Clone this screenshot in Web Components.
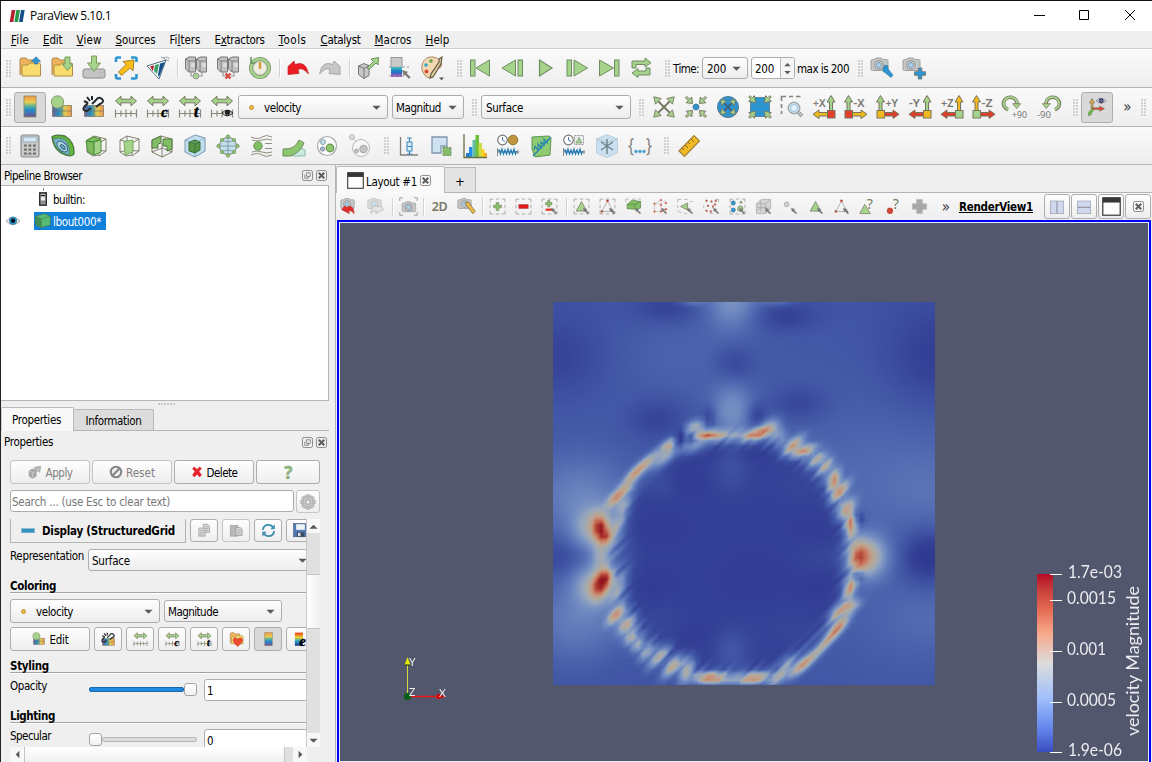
<!DOCTYPE html>
<html lang="en">
<head>
<meta charset="utf-8">
<title>ParaView 5.10.1</title>
<style>
html,body{margin:0;height:100%;overflow:hidden;background:#efefef}
body{font:11.5px/14px "DejaVu Sans Condensed","DejaVu Sans",sans-serif;font-stretch:condensed;color:#000}
</style>
</head>
<body>
<pv-app></pv-app>
<script>
const G='#a6d38b', O='#75745f', B='#2c95d1';
const s=(d,f='none',c=O,w=1,x='')=>`<path d="${d}" fill="${f}" stroke="${c}" stroke-width="${w}" ${x}/>`;
const circ=(x,y,r,f,c=O,w=1)=>`<circle cx="${x}" cy="${y}" r="${r}" fill="${f}" stroke="${c}" stroke-width="${w}"/>`;
const rect=(x,y,w,h,f,c='none',k=1,e='')=>`<rect x="${x}" y="${y}" width="${w}" height="${h}" fill="${f}" stroke="${c}" stroke-width="${k}" ${e}/>`;
const txt=(x,y,t,z=9,c='#777770',e='')=>`<text x="${x}" y="${y}" font-size="${z}" fill="${c}" font-weight="bold" lengthAdjust="spacingAndGlyphs" ${e}>${t}</text>`;
const rng=s('M1 18.5H23M1.5 14.5v8M7 15.5v6M12 14.5v8M17 15.5v6M22.5 14.5v8','none','#8a8878',1.2)+s('M1.5 6 7 1.2V4.2H17V1.2L22.5 6 17 10.8V7.8H7v3z',G);
const glyph='font-family="Liberation Serif" font-style="italic" stroke="#000" stroke-width=".5"';
const map=rect(2.5,10.5,19,11,'url(#rh)',O,.7)+s('M12 10.5v11M2.5 16h19','none','#5a6a70',.6);
const folder=(y=6)=>s(`M2 ${y+13}V${y-2}q0-2 2-2h4l2 2h7v3`,'#eeb45e','#ad8448')+s(`M4 ${y+14}V${y+4}q0-1 1-1h5l1.500-2H21q1.500 0 1.500 1.500V${y+14}z`,'#f8dd6e','#ad8c48');
const servers=s('M1.500 3 5 1h6.500V16H5l-3.500-3zM12.500 3 16 1h6.500V16H16l-3.500-3z','#c3c1c1','#777')+s('M1.500 3 5 5v11M5 5h6.500M12.500 3 16 5v11M16 5h6.500','none','#777',.9)+s('M7 8h4M7 10h4M18 8h4M18 10h4','none','#f5eef0',1)+s('M7 16v4h3M18 16v4h-3','none','#9a9a9a',1.200);
const cam=(c='#c4c6c8')=>s('M1 5q0-1.500 1.500-1.500H5L6 2h5.500l1 1.500h4Q18 3.500 18 5v8q0 1.500-1.500 1.500h-14Q1 14.500 1 13z',c,'#a2a2a2')+circ(9,9,4.200,'#e5e8ea','#999',1.300)+circ(9,9,2.500,'#a9d4f0','#7b98ab',1);
const cubeWire=s('M3 6 10 2l12 3-7 4zM3 6v12l6 4 6-1V9M22 5v12l-7 5M10 2v14l12 1M10 16 3 18','none',O,.9);
const plus=(f='#8bc06c',x=12,y=12,r=5)=>s(`M${x-r/3} ${y-r}h${r*2/3}v${r*2/3}h${r*2/3}v${r*2/3}h${-r*2/3}v${r*2/3}h${-r*2/3}v${-r*2/3}h${-r*2/3}v${-r*2/3}h${r*2/3}z`,f,O,.8);
const dash=s('M1.500 6V1.500H6M9.500 1.500h5M18 1.500h4.500V6M22.500 9.500v5M22.500 18v4.500H18M14.500 22.500h-5M6 22.500H1.500V18M1.500 14.500v-5','none','#a3a39c',1.200);
const ptr=s('M14.500 14.500l5 1.500-1.200 1.200 4 4-1.300 1.300-4-4-1 1z','#777','#777',.6);
const tri=s('M12 5 19.500 18.500h-15z',G);
const clock=(x=6.500,y=6)=>circ(x,y,4.800,'#fff','#777',1.200)+s(`M${x} ${y-3}v3l2.500 1.500`,'none','#47a',1);
const wave=s('M1.500 14v8M1 18h22M22 16v4','none','#888',1)+s('M2 17l1.500-1 1 4 1.500-5 1.500 5 1.500-4 1.500 4 1.500-5 1.500 5 1.500-4 1.500 4 1.500-5 1.500 5 1-3','none','#1f79b4',1.200);
const axes=(up,side,box,dir,t)=>{const L=dir<0,x=L?19:4.500;return s(`M${x-1.500} 16V7h-2.500L${x} .5l4 6.500H${x+1.500}V16z`,up)+(L?s('M16 17.500H7V15L1 19.300 7 23.500V21h9z',side):s('M8 17.500h9V15l6 4.300-6 4.200V21H8z',side))+rect(x-3.500,15.500,7.500,7.500,box,O)+txt(L?1:9.500,11.500,t,11,'#777770','style="font-weight:600" textLength="'+(t[0]==='+'?12.5:11)+'"')};
const arrowIn=(a,x=12,y=12)=>[45,135,225,315].map(r=>`<g transform="rotate(${r} ${x} ${y})">${s(a,G,O,.9)}</g>`).join('');
const rot=s('M18.500 10.500A7.500 7 0 1 0 9 15','none',O,4)+s('M18.500 11A7.500 7 0 1 0 9.500 15','none',G,2.200)+s('M14 8.500h9l-4.500 5.500z',G,O,.8);
const page=(x,y)=>s(`M${x} ${y}h7l3 3v10h-10z`,'#d9d9d9','#8b8b8b')+s(`M${x+2} ${y+4}h6M${x+2} ${y+7}h6M${x+2} ${y+10}h6`,'none','#999');
const triW=s('M12 4 4 19h16z','none','#999',1)+circ(12,4,1.600,'#c83c31','#a44',.5)+circ(4,19,1.600,'#a5684f','#a44',.5)+circ(19.500,19,1.300,'#a5684f','#a44',.5);
const dots=(c,...p)=>p.map(([x,y])=>circ(x,y,1.400,c,c,.5)).join('');
const ICONS={
logo:'<path d="M4 3h5.500L6.500 21H1z" fill="#b5202e"/><path d="M11 3h5.500l-3 18H8z" fill="#259a49"/><path d="M18 3h5.500l-3 18H15z" fill="#11508a"/>',
open:folder()+s('M16.500 8V5.500H13.500L18 .7l4.500 4.800h-3V8z',B,'#3a7da8',.8),
recent:folder()+s('M15 1h5v7h3l-5.500 6.500L12 8h3z',G,'#7a9c5b'),
save:s('M1 15q0-2 2-2h18q2 0 2 2v5q0 2-2 2H3q-2 0-2-2z','#c4c4c4','#8c8c8c')+s('M9.500 0h5v7h4L12 15.500 5.500 7h4z',G,'#7a9c5b')+rect(18,16.500,2.500,2.500,'#eee','#999',.6),
extract:s('M2 6V3q0-1.500 1.500-1.500H7M17 1.500h4q1.500 0 1.500 1.500v3M22.500 18v3q0 1.500-1.500 1.500h-4M7 22.500H3.500Q2 22.500 2 21v-3','none',B,2.600)+s('M20 4l-1 11-3-3-8.500 7.500L4.500 16 12 8.500 9 5.500z','#f9bd16','#a1802d'),
catalyst:s('M1 10 20 4l-7 19z','#fff','#4f6e78')+s('M4 10.500l4-1.300-1 6z','#b12334','none')+s('M9 9l4-1-2 10-3-3z','#34a167','none')+s('M14 7.500l5-1.500-6 15-1-2z','#154e8b','none')+s('M15 1l8 4M17 2q6-2 6 1','none','#99a',.9),
connect:servers+circ(12,20,3,G,'#999'),
disconnect:servers+s('M9.500 17.500l5 5M14.500 17.500l-5 5','none','#d94a43',2.400),
history:circ(12,12,9,'#f5f5ee','#7a9170',4)+circ(12,12,9,'none',G,2.600)+s('M3 1v6h7','none','#6b935b',1.600)+circ(12,12,6.500,'#f0ede2','#c0beb2',.8)+s('M12 6v7','none','#d39f39',2.500),
undo:s('M2 10.500 8 5l1 3.500Q20 4 22.500 18q-6-7-10.500-4.500l1 4-11 1z','#ea1b22','#bd2227',.7),
redo:s('M22 10.500 16 5l-1 3.500Q4 4 1.500 18q6-7 10.500-4.500l-1 4 11 1z','#c7c7c7','#a0a0a0',.9),
source:s('M2.500 10 8 7.500l5 2v10L8 22.500l-5.500-4zM2.500 10 8 12.500v10M8 12.500l5-3','#c7c7c7','#777')+s('M11 12l6.500-6.500L15 3l7.500-1.500L22 9l-2-2-6.500 6z',G,'#6b935b'),
cells:rect(3,1.500,11,10,'#cacbc9','#999')+rect(3,11,11,10,'url(#rb2)','none')+s('M1 11h20M1 20h15','none','#99a',1,'stroke-dasharray="2.5 2"')+ptr,
palette:s('M13 1C3 0-1 11 4 18q3 5 7 3l1-5q1-3 5-3 6-1 4-7Q18 1 13 1z','#f4d8b1','#a68866')+circ(6,9,1.800,'#30a8d0','none')+circ(6.500,15.500,2,'#d94c35','none')+circ(11,5,1.800,'#5d9b45','none')+s('M19 3l3-2-1 7-8 13-3 1 1-4 8-12z','#dccaa0','#655940',1.200)+s('M19 21.500h5l-2.500 2.700z','#555','none'),
first:rect(1.500,4,4.500,16,G,'#6f8c61')+s('M20.500 4v16L7 12z',G,'#6f8c61'),
prev:rect(17,4,4.500,16,G,'#6f8c61')+s('M14.500 4v16L1 12z',G,'#6f8c61'),
play:s('M6.500 4v16L19 12z',G,'#6f8c61',1.200),
next:rect(2,4,4.500,16,G,'#6f8c61')+s('M9 4v16l13.500-8z',G,'#6f8c61'),
last:rect(17.500,4,4.500,16,G,'#6f8c61')+s('M2.500 4v16L16.500 12z',G,'#6f8c61'),
loop:s('M3 12V5h13V2l6 4.700-6 4.300V8.500H7V12zM21 12v7H9v2.500L3 17l6-4.500v2.500h8V12z',G,'#6f8c61'),
camset:cam()+s('M13 12l2-3 3 1v3l5 6-2 2.500-6-5-2-1z',B,'#3c7da5',.7),
camadd:cam()+plus(B,18,17.500,5.500),
bar:rect(6,1,12,21,'url(#rb)','#8e8760',.8),
editmap:map+circ(7.500,7,6.200,G,'#8b9b71'),
resetmap:map+s('M6 8l-4 4q-2 4 3 4l4-3M10 9l4-4q3-4 6-1t-2 5l-4 3M5 2l3 4M10 1v4M2 6l4 2','none','#252b2e',2),
range:rng,
rangec:rng+txt(15,22,'c',15,'#000',glyph),
ranget:rng+txt(16,22,'t',16,'#000',glyph),
rangee:rng+s('M12 18q5-5.500 11 0-6 5.500-11 0z','#ddd','#222',1)+circ(17.500,17.500,2.300,'#222','#000',.6),
reset:[45,135,225,315].map(r=>`<g transform="rotate(${r} 12 12)">${s('M12 12V3','none',O,1.800)+s('M12-2.500l4 6.500H8z',G,O,.8)}</g>`).join(''),
zoomdata:arrowIn('M11-2h2v4h3l-4 5-4-5h3z')+circ(12,12,3,B,'#5680a0'),
zoombox:circ(12,12,10.500,B,'#56758b')+[45,135,225,315].map(r=>`<g transform="rotate(${r} 12 12)">${s('M12 12V6','none','#456',1.500)+s('M12 1.500l3.500 5H8.500z',G,O,.8)}</g>`).join(''),
zoomclose:s('M6 2.500h12v3h3.500v13H18v3H6v-3H2.500v-13H6z',B,'#4f7791',.8)+arrowIn('M11-3h2v3h3l-4 6-4-6h3z'),
rubber:s('M1.500 6V1.500H6M9 1.500h4M16 1.500h4.500M1.500 9v4M1.500 16v3','none','#85857d',1.600)+s('M18 17l4 4','none','#888',3.500)+s('M18 17l4 4','none','#c5c5c5',2)+circ(14,13,5.800,'#c8e2f2','#a5aaad',1.400)+circ(14,13,3.500,'#e6f3fb','#8bb6d4',.8),
px:axes(G,'#f0b91d','#e43e28',-1,'+X'),mx:axes(G,'#f0b91d','#e43e28',1,'-X'),
py:axes(G,'#df3d29','#f4b81e',1,'+Y'),my:axes(G,'#df3d29','#f4b81e',-1,'-Y'),
pz:axes('#f4b81e','#df3d29',G,-1,'+Z'),mz:axes('#f4b81e','#df3d29',G,1,'-Z'),
rp:`<g transform="translate(-4 1) scale(.9)">${rot}</g>`+txt(8,23,'+90',9.500,'#777','style="font-weight:400" textLength="15"'),
rm:`<g transform="translate(27 1) scale(-.9 .9)">${rot}</g>`+txt(1,23,'-90',9.500,'#777','style="font-weight:400" textLength="14"'),
axesview:s('M5 14V7H3l3-5 3 5H7v7z','#e9a93c',O,.9)+s('M6 13h9v-2.300l6 3.300-6 3v-2H6z','#e2462c',O,.7)+s('M6 14l-4 4-.5 4.500 4.500-1.500-1-1 3-4z','#66bf40',O,.6)+s('M11 4.500q5-5.500 12 0-6 5.500-12 0z','#eef','#767690')+circ(17,4.500,2.600,'#58629a','#334'),
calc:rect(3,1,18,22,'#cacaca','#8e8e8e',1.200,'rx="2"')+rect(5,3,14,5,'#d3e8f7','#9caab3')+[10.500,14.500,18.500].map(y=>[6,10.500,15].map(x=>rect(x,y,2.800,2.200,'#736f68')).join('')).join(''),
contour:s('M1 3Q4 0 14 2q10 6 9 18-2 3-8 1Q3 18 1 3z','#62b53c','#45753a',1.300)+s('M2 5q9-3 14 3 4 7 2 13Q5 19 2 5z','#79b2cb','#4d8a5c')+'<ellipse cx="11.500" cy="13" rx="6.500" ry="4" fill="#afd5e1" stroke="#356b83" transform="rotate(45 12 12.500)"/><ellipse cx="12" cy="13.500" rx="3" ry="1.500" fill="#6ca8c0" stroke="#356b83" transform="rotate(45 12.500 13)"/>',
clip:cubeWire+s('M2 7l8 1v13l-6-3zM2 7l7-4 8 2-7 3z','#7dbb5e','#4d8f3b')+s('M10 8l7-2v12l-7 3z',G,'#4d8f3b'),
slice:cubeWire+s('M7 7.500l9-1.500v12l-8 3z',G,'#74a95d'),
thresh:s('M2 6 11 2l11 3v13l-10 5-10-5zM12 9v14M2 18l10-4 10 4','none',O,.9)+s('M2 6l9-4v7l-3 1v4H2zM13 5l9 0v10l-5 2v-5h-4z','#82bd64','#4d7842'),
subset:s('M2 6 12 1l10 3v13l-10 6-10-5z','#c2dff1','#7b9aae')+s('M6 8l6-2 5 2v8l-5 3-6-2z','#559544','#376e33')+s('M6 8l6 2 5-2M12 10v9','none','#376e33',.8)+s('M2 6l10 3 10-5M12 19v4','none','#7aa0b4',.6),
glyphs:circ(12,12,8.500,'#c5dfed',O)+s('M12 3.500v17M3.500 12h17M6 6.500q6 3 12 0M6 17.500q6-3 12 0','none','#6f8f9d',.8)+[[12,2.500],[21.500,12],[12,21.500],[2.500,12],[6,6],[18,6],[6,18],[18,18]].map(([x,y])=>circ(x,y,1.700,'#8fc073','#6e9c58',.7)).join(''),
stream:s('M2 3q7 3 11 0t10 0M3 6q5 2 10 0t10 0M2 21q7-3 11 0t10 0M3 18q5-2 10 0t10 0M16 9.500h7M16 14.500h7','none','#908f80',1)+circ(9,12,4.200,'#82bf63','#669553'),
warp:s('M15 12l8 4v6H9z','#c8e9df','#95b9ae')+s('M1 15q12 1 16-9l5 3Q18 19 8 22H1z','#8dc66d','#6b8d5b'),
group:circ(12,12,9.500,'#fbfbfb','#aaa',1.200)+circ(8,8,2.500,'#c5ddec','#8aa')+circ(15,14,3.800,'#8dc66d','#65934d',1.200)+circ(7.500,15,2,'#a9cbd7','#779'),
extractg:circ(13,14,8.500,'#f6f6f6','#bbb')+circ(4,3,2.500,'#ddd','#bbb')+circ(15.500,15,3.800,'#c3c3c3','#aaa')+circ(8.500,17,1.800,'#ccc','#999')+s('M5.500 5l3 3','none','#bbb'),
boxplot:s('M3.500 3v18H21','none','#80807b',1.300)+s('M12.500 4v4M12.500 17v3M10 4h5M10 20h5','none','#3888bb',1.200)+rect(10,8,5,9,'#d8eaf3','#3888bb')+s('M10 12.500h5','none','#3888bb'),
extractsel:s('M2 3h15v9h-6v7H2z','#cfe2ef','#8196ae',1.300)+rect(13,13.500,8,8,'#87bc6c','#688c58',1,'stroke-dasharray="2 1"'),
hist:rect(3,19,4,4,'#2f77c8')+rect(6,13,3.500,10,'#218fea')+rect(9.500,6,3.500,17,'#62bfae')+rect(12.500,1,3.500,22,'#6dbf3a')+rect(15.500,9,3.500,14,'#c9dc44')+rect(18.500,15,3,8,'#ffd020')+rect(21,19,3,4,'#f3ad22')+s('M1 0v23.500h23','none','#6a6f46',1.300),
plottime:clock()+circ(17,6,4.800,'#bd963f','#977739')+wave,
plotline:s('M3 3l17-1 2 2-1 17-15 2-3-8z','#8fcb72','#609650')+s('M4 22 22 3','none','#2585af',1.300)+s('M5 16l1-4 3 4 0-6 3 4 0-6 3 3 0-6 3 4 1-4','none','#2585af',1.200),
plotsel:clock()+rect(12.500,1.500,9,9,'#eee','#999',1,'stroke-dasharray="2 1"')+s('M17 3.500 20 9h-6z',G,'#8a8')+wave,
probe:s('M12 .5 22.500 5v14L12 23.500 1.500 19V5z','#c9dfef','#bdd1df')+s('M1.500 5 12 9l10.500-4','none','#a9c1d0')+s('M12 5v15M6 8l12 8M18 8 6 16','none','#6f8089',1.400),
braces:txt(0,18,'{',20,'#83847f','style="font-weight:400" textLength="6"')+txt(18,18,'}',20,'#83847f','style="font-weight:400" textLength="6"')+dots('#3f9ecb',[8,17.5],[12,17.5],[16,17.5]),
ruler:s('M2 17 17 1.500 22.500 7 7.500 22.500z','#f2ba22','#a4803c',1.200)+s('M5 14l2 2M8 11l3 3M11 8l2 2M14 5l3 3','none','#8b6922',1),
builtin:rect(6.500,1.500,11,21,'#c4c4c4','#222',2.500)+rect(8.500,5,7,2,'#222')+rect(8.500,9,7,5,'#eee')+rect(8.500,15,7,5,'#888'),
cube:s('M1 5 14 1l9 4v13l-14 4-8-5z','#54bd73','#507e49')+s('M1 5l8 4v13','none','#507e49')+s('M1 5l8 4v13l-8-5z','#3d9158','#507e49')+s('M9 9l14-4','none','#507e49'),
eye:s('M0 12Q12-1 24 12 12 25 0 12z','#f5f5f5','#a5a5a5',1.600)+circ(12,11.5,6.5,'#2d94c6','#246c91')+circ(12,11.5,3.2,'#001','#012'),
float:s('M5 1h14q4 0 4 4v14q0 4-4 4H5q-4 0-4-4V5q0-4 4-4z','none','#777',1.800)+s('M10 6h8v8h-8zM6 10v8h8v-4','none','#777',1.800),
close:s('M5 1h14q4 0 4 4v14q0 4-4 4H5q-4 0-4-4V5q0-4 4-4z','none','#777',1.800)+s('M6 6l12 12M18 6 6 18','none','#5e5e5e',4.500),
apply:s('M2 10 8 7l6 3v9l-6 4-6-4z','#aaa','#888')+s('M2 10l6 3 6-3M8 13v10','none','#ddd')+s('M11 4l11-2-2 11-3-3-5 2v-4z','#bbb','#999'),
noentry:circ(12,12,9,'#eee','#858585',3.500)+s('M6 18 18 6','none','#858585',3.500),
redx:s('M3 5l4-3 5 5 5-5 4 3-5 6 5 7-4 4-5-6-5 6-4-4 5-7z','#ee202a','#b81c23'),
help:txt(6,21,'?',24,'#93be7d','stroke="#64835a" stroke-width=".5"'),
gear:[0,45,90,135].map(r=>`<g transform="rotate(${r} 12 12)">${rect(9,1,6,22,'#c3c3c3','#999',.8,'rx="1"')}</g>`).join('')+circ(12,12,7.500,'#c9c9c9','#aaa')+circ(12,12,3.500,'#eee','#999',1.500),
minus:rect(1,8,22,7,'#3191bf','#7db0cc'),
copy:page(10,2)+page(3,8),
paste:rect(2,4,12,17,'#b8b8b8','#999')+page(11,7),
refresh:s('M3 11q1-8 9-8 5 0 7 4M21 13q-1 8-9 8-5 0-7-4','none','#3d8ead',3)+s('M22 2v8h-7zM2 22v-8h7z','#3d8ead','none'),
floppy:rect(1,1,22,21,'#5178b0','#365977')+rect(5,2,14,9,'#eef3f5')+rect(6,15,12,7,'#384d5e')+rect(8,16,4,5,'#dde'),
heart:folder(5)+s('M14 23Q3 14 8 10q4-2 6 2 2-4 6-2 5 4-6 13z','#ef4931','#ce4031'),
jet:rect(3,1,13,21,'url(#jet)','none')+txt(10,23,'e',24,'#000',glyph),
undocam:cam()+s('M2 16l4-5 2 2q9-5 10 8-4-5-7-3l1 3z','#e12c2b','#af3a35',.7),
redocam:`<g opacity=".55">${cam()+s('M21 16l-4-5-2 2q-9-5-10 8 4-5 7-3l-1 3z','#ddd','#888')}</g>`,
shot:`<g transform="translate(3 4)">${cam()}</g>`+s('M1 5V1h4M19 1h4v4M23 19v4h-4M5 23H1v-4','none','#888',1),
camedit:cam()+s('M10 8l4-2 9 12-3 3z','#ecbb4b','#816b35'),
splus:dash+plus('#83c566',12,12,5.500),
sminus:dash+rect(5.500,9.500,13,5,'#e21d1d','#b63232'),
spm:dash+plus('#83c566',11,8,4.500)+rect(6.500,15,9,3,'#e62a1e')+ptr,
sf:dash+tri+ptr, sp:dash+triW+ptr,
sfr:s('M1 6V1.500H6M10 1.500h5M18 1.500h4.500','none','#a3a39c')+s('M3 9l7-6 12 2v9l-6 2-13-1z','#83bf65','#558444')+s('M3 9h11l8-4M14 9v7','none','#558444')+ptr,
spf:dots('#d75448',[5,8],[14,3],[21,7],[5,19],[14,19],[21,16],[14,10])+s('M5 8h9l7-5M14 8v11M5 8v11h9M5 8l9-5','none','#b3b3ab',.8)+ptr,
sfp:s('M1 6V2H6M10 2h5M18 5h4M1 10v4M1 18l5 3M10 22h4','none','#a3a39c')+s('M5 12l10-5v10z',G)+ptr,
spp:s('M18 2h4v4M10 22h4M1 10v4','none','#a3a39c')+dots('#ae6354',[5,4],[12,5],[18,4],[7,11],[14,12],[5,18],[11,19],[17,9])+ptr,
sblk:dash+circ(6,7,3.200,B,'#678',.6)+circ(6,17,3.200,B,'#678',.6)+circ(16,15,3.800,G)+circ(17,6,1.500,G)+ptr,
icube:s('M2 8 9 2h13v13l-7 7H2zM2 8h13v14M15 8l7-6M2 13h13M8 3v16M2 18l5-4h12','#d4d4d4','#a8a8a8')+ptr,
ipt:circ(8,9,3.500,'#ccc','#aaa')+ptr, ht:tri+ptr, hp:triW+ptr,
qf:s('M8 9l8 13H1z',G)+txt(11,15,'?',20,'#727c60','style="font-weight:400"'),
qp:circ(7,18,4,'#d84532','#a93f32')+txt(11,15,'?',20,'#6c7b61','style="font-weight:400"'),
gplus:s('M8 2h8v6h6v8h-6v6H8v-6H2V8h6z','#a7a7a7','#b8b8b8'),
sh:rect(2,3,20,19,'#d0d8ee','#9b9caa')+s('M12 3v19','none','#9b9caa',2),
sv:rect(2,3,20,19,'#d0d8ee','#9b9caa')+s('M2 12.500h20','none','#9b9caa',2),
win:rect(1,1,22,22,'#fdfdfd','#333',1.500)+rect(1,1,22,6,'#33373a'),
down:'<path d="M1 7h22L12 18z" fill="#595959"/>',up:'<path d="M1 18h22L12 7z" fill="#595959"/>',
left:'<path d="M17 2v20L7 12z" fill="#595959"/>',right:'<path d="M7 2v20l10-10z" fill="#595959"/>'
};
const DEFS=`<defs><linearGradient id="rb" x1="0" y1="0" x2="0" y2="1"><stop offset="0" stop-color="#ef9444"/><stop offset=".3" stop-color="#eacd4e"/><stop offset=".45" stop-color="#70b88e"/><stop offset=".65" stop-color="#218fcc"/><stop offset="1" stop-color="#705092"/></linearGradient><linearGradient id="rb2" x1="0" y1="0" x2="0" y2="1"><stop offset="0" stop-color="#31c4c0"/><stop offset=".5" stop-color="#1d72c8"/><stop offset="1" stop-color="#b456b0"/></linearGradient><linearGradient id="rh"><stop offset="0" stop-color="#6e5f98"/><stop offset=".35" stop-color="#2692c1"/><stop offset=".65" stop-color="#e3ca51"/><stop offset="1" stop-color="#ed934d"/></linearGradient><linearGradient id="jet" x1="0" y1="0" x2="0" y2="1"><stop offset="0" stop-color="#e43418"/><stop offset=".35" stop-color="#efd32a"/><stop offset=".65" stop-color="#25a4ca"/><stop offset="1" stop-color="#24318b"/></linearGradient></defs>`;

class Base extends HTMLElement{
  connectedCallback(){ if(this.shadowRoot) return; this.attachShadow({mode:'open'}).innerHTML=`<style>:host{box-sizing:border-box}*{box-sizing:border-box}${this.css()}</style>${this.html()}`; this.ready(); }
  css(){return ''} html(){return '<slot></slot>'} ready(){}
  a(n,d=''){return this.getAttribute(n)??d}
}
const def=(n,c)=>customElements.define(n,c);

def('pv-icon',class extends Base{
  css(){const z=this.a('size',24);return `:host{display:inline-flex;flex:none;align-items:center;justify-content:center;width:${this.a('w',z)}px;height:${z}px}svg{display:block;overflow:visible;font-family:"Noto Sans",sans-serif}`}
  html(){const z=this.a('size',24);return `<svg width="${z}" height="${z}" viewBox="0 0 24 24">${DEFS}${ICONS[this.a('n')]||''}</svg>`}
});
/* Label whose letter spacing is adjusted to fill the given width. */
def('fit-text',class extends Base{
  css(){return `:host{display:inline-block;flex:none;white-space:nowrap;width:${this.a('w')}px}span{display:inline-block}`}
  html(){return '<span><slot></slot></span>'}
  ready(){const e=this.shadowRoot.querySelector('span'),n=this.textContent.length,w=e.getBoundingClientRect().width;if(w)e.style.letterSpacing=((+this.a('w')-w)/n)+'px'}
});
def('pv-grip',class extends Base{
  css(){return `:host{display:block;flex:none;width:${this.a('w',16)}px;height:17px;padding-left:${this.a('p',6)}px}i{display:block;width:5px;height:17px;background:radial-gradient(circle at 1px 1px,#bcbcbc .6px,transparent .9px) 0 0/3px 3px}`}
  html(){return '<i></i>'}
});
def('pv-sep',class extends Base{
  css(){return `:host{display:block;flex:none;width:${this.a('w',6)}px;height:${this.a('h',18)}px;padding-left:${this.a('p',3)}px}i{display:block;width:2px;height:100%;background:#d2d2d2;border-right:1px solid #fff}`}
  html(){return '<i></i>'}
});
def('pv-toolbar',class extends Base{
  css(){return `:host{display:flex;align-items:center;height:39px;background:linear-gradient(#fafafa,#eee);border-bottom:1px solid #b4b4b4;overflow:hidden}`}
});
def('pv-button',class extends Base{
  css(){const on=this.hasAttribute('on');return `:host{display:flex;flex:none;align-items:center;justify-content:center;gap:${this.a('gap',4)}px;width:${this.a('w')}px;height:${this.a('h',24)}px;border:1px solid ${this.hasAttribute('off')?'#c4c4c4':'#adadad'};border-radius:3px;background:${on?'#d9d9d9':'linear-gradient(#fefefe,#eee)'};color:${this.hasAttribute('off')?'#808080':'#000'}}::slotted(fit-text){margin-top:2px}`}
});
def('pv-combo',class extends Base{
  css(){return `:host{display:flex;flex:none;align-items:center;width:${this.a('w')}px;height:${this.a('h',24)}px;border:1px solid #adadad;border-radius:3px;background:linear-gradient(#fefefe,#ededed);padding:0 ${this.a('pr',6)}px 0 4px}::slotted(fit-text){margin-top:2px}div{flex:1;display:flex;align-items:center;overflow:hidden;white-space:nowrap}i{width:5px;height:5px;border-radius:3px;background:#f5bd37;border:1px solid #b98f35;margin:0 10px 0 6px;flex:none}`}
  html(){return `<div>${this.hasAttribute('dot')?'<i></i>':''}<slot></slot></div><pv-icon n="down" size="9"></pv-icon>`}
});
def('pv-field',class extends Base{
  css(){return `:host{display:flex;flex:none;align-items:center;width:${this.a('w')}px;height:${this.a('h',23)}px;border:1px solid #adadad;border-radius:3px;background:#fff;padding:2px 0 0 ${this.a('p',2)}px;color:${this.a('c','#000')};overflow:hidden}`}
});
def('pv-spin',class extends Base{
  css(){return `:host{display:flex;flex:none;width:44px;height:22px;border:1px solid #adadad;border-radius:3px;background:#fff;overflow:hidden}div{flex:1;padding:4px 0 0 3px}aside{width:14px;border-left:1px solid #bbb;background:#f5f5f5;display:flex;flex-direction:column;align-items:center;justify-content:center;gap:1px}`}
  html(){return '<div><slot></slot></div><aside><pv-icon n="up" size="7"></pv-icon><pv-icon n="down" size="7"></pv-icon></aside>'}
});
def('pv-title',class extends Base{
  css(){return `:host{display:flex;align-items:center;height:30px;background:#fff;font:12px/16px "Open Sans",sans-serif;padding-left:8px}fit-text{margin-left:5px}svg{margin-left:auto;display:block}`}
  html(){return `<pv-icon n="logo" size="16"></pv-icon><fit-text w="81">ParaView 5.10.1</fit-text><svg width="122" height="30" fill="none" stroke="#000"><path d="M4 14.500h11M49.500 9.500h9v9h-9zM95 9l10 10M105 9l-10 10"/></svg>`}
});
def('pv-menu',class extends Base{
  css(){return `:host{display:flex;gap:14px;height:18px;background:#efefef;border-bottom:1px solid #cfcfcf;padding:2px 0 0 10px}fit-text{height:14px}u{text-underline-offset:1px}`}
  html(){return [['<u>F</u>ile',18],['<u>E</u>dit',19.500],['<u>V</u>iew',25],['<u>S</u>ources',40],['Fi<u>l</u>ters',31],['E<u>x</u>tractors',50],['<u>T</u>ools',28],['<u>C</u>atalyst',40],['<u>M</u>acros',37],['<u>H</u>elp',24]].map(([t,w])=>`<fit-text w="${w}">${t}</fit-text>`).join('')}
});
const row=(l,w=32,z=24)=>l.split(' ').map(n=>`<pv-icon n="${n}" w="${w}" size="${z}"></pv-icon>`).join('');
def('pv-toolbars',class extends Base{
  css(){return `:host{display:block}pv-toolbar:last-of-type{height:38px}.chev{font-size:15px;width:15px;text-align:center;color:#333}.m{margin-top:2px}`}
  html(){return `
<pv-toolbar><pv-grip w="13" p="5"></pv-grip>${row('open recent save extract catalyst')}<pv-sep></pv-sep>${row('connect disconnect history')}<pv-sep></pv-sep>${row('undo redo')}<pv-sep></pv-sep>${row('source cells palette')}<pv-grip w="17" p="9"></pv-grip>${row('first prev play next last loop')}<pv-grip w="16" p="8"></pv-grip><fit-text class="m" w="26">Time:</fit-text><pv-combo w="46" h="22" style="margin:0 3px"><fit-text w="19">200</fit-text></pv-combo><pv-spin><fit-text w="19">200</fit-text></pv-spin><fit-text class="m" w="52" style="margin-left:2px">max is 200</fit-text><pv-grip w="17" p="9"></pv-grip>${row('camset camadd')}</pv-toolbar>
<pv-toolbar><pv-grip w="13" p="5"></pv-grip><pv-button w="32" h="31" on><pv-icon n="bar"></pv-icon></pv-button>${row('editmap resetmap range rangec ranget rangee')}<pv-combo w="150" dot style="margin-right:4px"><fit-text w="37">velocity</fit-text></pv-combo><pv-combo w="72" style="padding-left:3px"><fit-text w="45">Magnitud</fit-text></pv-combo><pv-grip w="17" p="8"></pv-grip><pv-combo w="150"><fit-text w="37">Surface</fit-text></pv-combo><pv-grip w="17" p="8"></pv-grip>${row('reset zoomdata zoombox zoomclose rubber px mx py my pz mz rp rm')}<pv-grip w="17" p="9"></pv-grip><pv-button w="32" h="31" on><pv-icon n="axesview" size="20"></pv-icon></pv-button><span class="chev" style="margin-left:7px">»</span><pv-grip w="16" p="6"></pv-grip></pv-toolbar>
<pv-toolbar><pv-grip w="12" p="5"></pv-grip>${row('calc contour clip slice thresh subset glyphs stream warp group extractg',33)}<pv-grip w="16" p="8"></pv-grip>${row('boxplot extractsel hist plottime plotline plotsel probe braces',33)}<pv-grip w="16" p="8"></pv-grip>${row('ruler',33)}</pv-toolbar>`}
});
def('pv-dockhead',class extends Base{
  css(){return `:host{display:flex;align-items:center;gap:3px;padding:1px 2px 0 3px}slot{display:block}b{flex:1}`}
  html(){return `<slot></slot><b></b><pv-icon n="float" size="11"></pv-icon><pv-icon n="close" size="11"></pv-icon>`}
});
def('pv-pipeline',class extends Base{
  css(){return `:host{display:block;height:216px;margin-right:6px;border:1px solid #b4b4b4;border-left:0;background:#fff;padding-top:2px}div{display:flex;align-items:center;height:22px}.a{padding-left:35px;background:linear-gradient(#888,#888) 42px 0/1px 3px no-repeat}.b{padding-left:5px}.sel{height:18px;width:72px;margin-left:14px;background:#0f81dc;color:#fff;padding-left:1px}fit-text{margin:1px 0 0 3px}`}
  html(){return `<div class="a"><pv-icon n="builtin" size="14"></pv-icon><fit-text w="32">builtin:</fit-text></div><div class="b"><pv-icon n="eye" size="14"></pv-icon><div class="sel"><pv-icon n="cube" size="16"></pv-icon><fit-text w="48" style="margin-left:2px">lbout000*</fit-text></div></div>`}
});
def('pv-tabs',class extends Base{
  css(){return `:host{display:flex;align-items:flex-end;height:24px;margin-right:6px;border-bottom:1px solid #b4b4b4}div{border:1px solid #b9b9b9;border-bottom:0;display:flex;justify-content:center;border-radius:2px 2px 0 0}.on{width:73px;height:24px;background:#f8f8f8;padding:5px 2px 0 0;margin-bottom:-1px;border-left-color:#ccc}.off{width:80px;height:21px;background:#dcdcdc;border-left:0;padding-top:4px}`}
  html(){return `<div class="on"><fit-text w="49">Properties</fit-text></div><div class="off"><fit-text w="56">Information</fit-text></div>`}
});
def('pv-section',class extends Base{
  css(){return `:host{display:block;height:15px;border-bottom:1px solid #a2a2a2;box-shadow:0 1px #fff;font-weight:bold;line-height:17px}`}
});
def('pv-slider',class extends Base{
  css(){const f=this.hasAttribute('full');return `:host{display:flex;align-items:center;width:108px;height:14px;flex:none}i{height:5px;flex:1;border:1px solid ${f?'#1769ad':'#b5b5b5'};background:${f?'#1f8ae0':'#dcdcdc'};order:${f?0:2};border-radius:2px}b{width:13px;height:13px;border:1px solid #a4a4a4;border-radius:3px;background:linear-gradient(#fff,#f1f1f1)}`}
  html(){return '<i></i><b></b>'}
});
def('pv-scroll',class extends Base{
  css(){const h=this.hasAttribute('h');return `:host{display:flex;flex-direction:${h?'row':'column'};background:#e0e0e0;overflow:hidden}div{flex:none;display:flex;align-items:center;justify-content:center;background:#f8f8f8;${h?'width:14px':'height:14px'}}.t{${h?'width:261px':'height:55px'};background:linear-gradient(${h?'':'90deg,'}#fff,#f0f0f0);border:1px solid #c4c4c4;${h?'border-width:0 1px':'border-width:1px 0'};${h?'':'margin-top:41px'}}b{flex:1}`}
  html(){const h=this.hasAttribute('h');return `<div><pv-icon n="${h?'left':'up'}" size="9"></pv-icon></div><div class="t"></div><b></b><div><pv-icon n="${h?'right':'down'}" size="9"></pv-icon></div>`}
});
def('pv-properties',class extends Base{
  css(){return `:host{display:block;padding:8px 0 0 9px}.r{display:flex}.area{display:grid;grid-template-columns:297px 13px;grid-template-rows:228px 15px;margin-top:6px}.in{overflow:hidden;border-right:1px solid #c8c8c8}.disp{flex:none;width:176px;height:24px;border:solid #b4b4b4;border-width:0 1px 1px;display:flex;align-items:center;padding-left:10px;font-weight:bold}pv-section{margin-bottom:6px}.in .r{gap:4px}`}
  html(){const ib=(n,x='')=>`<pv-button w="28" ${x}><pv-icon n="${n}" size="15"></pv-icon></pv-button>`;return `
<div class="r" style="gap:2px;height:24px"><pv-button w="80" off><pv-icon n="apply" size="14"></pv-icon><fit-text w="27">Apply</fit-text></pv-button><pv-button w="80" off gap="3"><pv-icon n="noentry" size="14"></pv-icon><fit-text w="29">Reset</fit-text></pv-button><pv-button w="80"><pv-icon n="redx" size="12"></pv-icon><fit-text w="31">Delete</fit-text></pv-button><pv-button w="64"><pv-icon n="help" size="17"></pv-icon></pv-button></div>
<div class="r" style="gap:2px;margin-top:6px"><pv-field w="284" h="22" p="1" c="#777"><fit-text w="158">Search ... (use Esc to clear text)</fit-text></pv-field><pv-button w="24" h="23" off><pv-icon n="gear" size="16"></pv-icon></pv-button></div>
<div class="area"><div class="in">
<div class="r" style="height:34px"><div class="disp"><pv-icon n="minus" size="14"></pv-icon><fit-text w="133" style="margin-left:7px">Display (StructuredGrid</fit-text></div>${ib('copy','h="23"')}${ib('paste','h="23" off')}${ib('refresh','h="23"')}${ib('floppy','h="23"')}</div>
<div class="r" style="height:28px;margin-top:-4px;gap:0"><fit-text w="74" style="margin-right:4px">Representation</fit-text><pv-combo w="220" h="22" pr="0" style="padding-left:3px"><fit-text w="38">Surface</fit-text></pv-combo></div>
<pv-section style="margin-top:1px"><fit-text w="46">Coloring</fit-text></pv-section>
<div class="r" style="height:28px;align-items:flex-start"><pv-combo w="150" dot><fit-text w="37">velocity</fit-text></pv-combo><pv-combo w="118" h="22" style="margin-top:1px;padding-left:3px"><fit-text w="50">Magnitude</fit-text></pv-combo></div>
<div class="r"><pv-button w="80"><pv-icon n="editmap" size="14"></pv-icon><fit-text w="19">Edit</fit-text></pv-button>${ib('resetmap')}${ib('range')}${ib('rangec')}${ib('ranget')}${ib('heart')}${ib('bar','on')}${ib('jet')}</div>
<pv-section style="margin:7px 0 6px"><fit-text w="39">Styling</fit-text></pv-section>
<div class="r" style="height:29px;gap:0"><fit-text w="37" style="margin-right:42px">Opacity</fit-text><pv-slider full style="margin-top:3px"></pv-slider><pv-field w="120" h="22" style="margin-left:7px">1</pv-field></div>
<pv-section><fit-text w="45">Lighting</fit-text></pv-section>
<div class="r" style="height:28px;gap:0"><fit-text w="41" style="margin-right:38px">Specular</fit-text><pv-slider style="margin-top:3px"></pv-slider><pv-field w="120" h="22" style="margin-left:7px">0</pv-field></div>
</div><pv-scroll></pv-scroll><pv-scroll h></pv-scroll></div>`}
});
def('pv-left',class extends Base{
  css(){return `:host{display:block;width:336px;flex:none;overflow:hidden;background:#efefef;border-left:1px solid #222;border-right:1px solid #b4b4b4}pv-dockhead{margin-right:6px}.dots{width:17px;height:6px;margin-left:157px;background:radial-gradient(circle at 1px 3px,#b5b5b5 .6px,transparent .9px) 0 0/3px 6px}`}
  html(){return `<pv-dockhead style="height:20px"><fit-text w="78">Pipeline Browser</fit-text></pv-dockhead><pv-pipeline></pv-pipeline><div class="dots"></div><pv-tabs></pv-tabs><pv-dockhead style="height:21px"><fit-text w="49">Properties</fit-text></pv-dockhead><pv-properties></pv-properties>`}
});
/* Velocity magnitude sampled on a regular grid and shaded triangle by triangle. */
def('pv-field-map',class extends Base{
  css(){return ':host{display:block;width:382px;height:383px}canvas{display:block}'}
  html(){return '<canvas width="382" height="383"></canvas>'}
  ready(){
    const low=[[410,160,210,120,.04],[10,180,160,120,-.08],[1165,180,160,150,-.10],[552,200,58,58,-.09],[350,30,85,42,-.08],[705,55,90,40,-.08],[320,360,85,60,-.08],[745,315,85,50,-.08],[545,5,75,85,.22],[545,335,60,85,.19],[425,12,40,10,.12],[680,12,50,10,.10],[1000,560,350,220,.07],[1160,580,160,110,.05],[1160,960,160,110,.06],[990,960,300,220,.05],[90,600,150,120,.17],[80,960,150,130,.17],[1130,775,70,75,-.16],[10,775,90,50,-.06]];
    const spot=[[470,410,44,14,0,.68],[620,406,40,14,-18,.64],[655,385,34,20,-35,.36],[545,412,80,18,0,.22],[432,385,30,18,-20,.45],[358,437,28,14,-35,.55],[345,475,50,16,-40,.38],[290,490,55,13,-44,.44],[248,530,48,14,-48,.48],[198,597,34,15,-44,.6],[232,570,26,13,-30,.22],[430,445,40,18,-15,.28],[728,440,38,16,-42,.58],[762,457,36,14,-20,.66],[800,482,30,12,-35,.52],[825,503,28,12,-50,.52],[850,545,16,34,15,.66],[868,580,38,14,-50,.62],[885,630,36,18,-45,.5],[900,677,16,36,0,.7],[925,775,26,42,0,.4],[948,775,58,62,0,.55],[898,868,16,38,15,.64],[895,925,35,16,-25,.5],[855,945,30,13,-50,.45],[865,983,45,15,-48,.6],[825,1035,60,12,-48,.48],[755,1100,50,15,-42,.66],[710,1090,30,13,-45,.3],[685,1135,40,13,-45,.46],[615,1138,42,14,-8,.7],[475,1138,45,14,0,.78],[545,1140,70,18,0,.24],[408,1115,18,42,18,.48],[365,1105,38,15,-50,.64],[325,1075,42,14,-48,.55],[288,1062,30,13,-50,.46],[262,1040,24,13,-50,.46],[242,1018,24,13,-45,.5],[228,980,32,20,-50,.52],[197,948,34,14,-48,.66],[150,692,20,38,-10,.62],[170,716,17,18,0,.3],[138,692,64,62,0,.42],[152,855,22,38,20,.66],[168,835,18,20,0,.26],[138,858,64,62,0,.42],[152,775,26,44,0,.28],[208,670,13,50,25,.26],[208,862,12,50,25,.26],[220,620,28,11,-45,.28],[685,412,24,26,25,.24],[385,425,14,28,20,-.42],[426,412,10,18,25,-.35],[920,832,20,14,0,-.35],[475,360,18,34,0,-.16],[618,350,26,34,0,-.15],[925,660,14,22,-30,-.2]];
    const inner=[[335,560,45,45,.05],[545,500,60,90,.07],[545,1060,55,70,.09],[800,775,70,50,.03],[225,775,45,60,.05],[760,560,130,80,.025],[340,970,90,60,.03],[720,990,120,70,.025],[410,545,45,40,-.02],[320,690,60,40,-.015],[310,860,50,40,-.02],[800,860,60,40,-.02],[790,690,60,40,-.015],[420,1005,50,40,-.02],[620,840,90,60,-.012],[600,470,50,25,-.03],[500,465,30,30,-.02]];
    const N=72,P=[],X0=9,W=1146,Y0=12,H=1149,sum=(l,x,y)=>l.reduce((b,[a,c,p,q,k])=>b+k*Math.exp(-(((x-a)/p)**2)-(((y-c)/q)**2)),0);
    for(let j=0;j<=N;j++)for(let i=0;i<=N;i++){
      const x=X0+W*i/N,y=Y0+H*j/N,r=Math.hypot(x-548,(y-773)*.978);
      const out=1/(1+Math.exp((354-r)/8)),ring=Math.exp(-(((r-348)/26)**2));
      let v=Math.max(.01,.125+.02*Math.sin(y/190)+sum(low,x,y))*out+Math.max(.01,.042+sum(inner,x,y))*(1-out);
      v+=ring*(.06+(x<460&&y<700?.015:.07)*Math.cos((x+y)/6.4));
      for(const[a,c,p,q,t,k]of spot){const u=x-a,w=y-c;if(u*u+w*w>26000)continue;const A=t*Math.PI/180,e=(u*Math.cos(A)+w*Math.sin(A))/p,f=(-u*Math.sin(A)+w*Math.cos(A))/q;v+=.82*k*Math.exp(-e*e-f*f)}
      P.push(Math.max(0,Math.min(1,v)));
    }
    const S=[[0,46,55,142],[.06,53,66,151],[.14,66,88,166],[.23,87,113,181],[.33,115,141,194],[.43,150,166,189],[.52,173,170,163],[.6,191,162,141],[.7,200,136,110],[.8,193,98,76],[.9,172,52,45],[1,145,20,32]];
    const g=this.shadowRoot.querySelector('canvas').getContext('2d'),im=g.createImageData(382,383);
    for(let y=0;y<383;y++)for(let x=0;x<382;x++){
      const u=x/382*N,w=y/383*N,i=u|0,j=w|0,f=u-i,h=w-j,o=j*(N+1)+i,a=P[o],b=P[o+1],c=P[o+N+1],d=P[o+N+2];
      const v=f+h<1?a+(b-a)*f+(c-a)*h:d+(c-d)*(1-f)+(b-d)*(1-h);
      let k=1;while(k<S.length-1&&v>S[k][0])k++;const l=S[k-1],m=S[k],t=(v-l[0])/(m[0]-l[0]),q=(y*382+x)*4;
      for(let n=1;n<4;n++)im.data[q+n-1]=l[n]+(m[n]-l[n])*t; im.data[q+3]=255;
    }
    g.putImageData(im,0,0);
  }
});
def('pv-view',class extends Base{
  css(){return `:host{display:block;position:relative;flex:1;margin:0 1px 0 1px;border:2px solid #0000f5;border-bottom:0;box-shadow:inset 0 0 0 1px #e8e8f8;background:#52576e;overflow:hidden}pv-field-map{position:absolute;left:214px;top:80px}svg{position:absolute;left:0;top:0;font-family:Lato,sans-serif}`}
  html(){return `<pv-field-map></pv-field-map><svg width="810" height="540"><defs><linearGradient id="cw" x1="0" y1="0" x2="0" y2="1"><stop offset="0" stop-color="#b40b27"/><stop offset=".08" stop-color="#c63a37"/><stop offset=".2" stop-color="#e36b54"/><stop offset=".33" stop-color="#f7a789"/><stop offset=".5" stop-color="#dddcdb"/><stop offset=".7" stop-color="#9fbffc"/><stop offset=".87" stop-color="#6285ea"/><stop offset="1" stop-color="#3b4cc0"/></linearGradient></defs><g><rect x="698" y="352" width="16" height="178" fill="url(#cw)"/><path d="M711 352.500h12M711 378.500h12M711 429.500h12M711 480.500h12M711 530.500h12" stroke="#fff"/><g fill="#ececf0" font-size="16.500"><text x="729" y="356" textLength="54" lengthAdjust="spacingAndGlyphs">1.7e-03</text><text x="728" y="382" textLength="49" lengthAdjust="spacingAndGlyphs">0.0015</text><text x="728" y="433" textLength="39" lengthAdjust="spacingAndGlyphs">0.001</text><text x="728" y="484" textLength="49" lengthAdjust="spacingAndGlyphs">0.0005</text><text x="729" y="534" textLength="54" lengthAdjust="spacingAndGlyphs">1.9e-06</text><text transform="translate(800 514) rotate(-90)" textLength="150" lengthAdjust="spacingAndGlyphs">velocity Magnitude</text></g><path d="M68.500 474v-34" stroke="#d6d63d"/><path d="M65.500 443l3-8 3 8z" fill="#e7e900"/><path d="M65.500 443h6" stroke="#222"/><path d="M68 474.500h32" stroke="#f01515" stroke-width="1.500"/><path d="M98 471.500l9 3-9 3z" fill="#d00"/><circle cx="68.500" cy="474.500" r="3.500" fill="#075f15"/><g fill="#eee" font-size="10.500"><text x="70" y="444">Y</text><text x="70" y="474">Z</text><text x="100" y="475">X</text></g></g></svg>`}
});
def('pv-main',class extends Base{
  css(){return `:host{display:flex;flex-direction:column;flex:1;min-width:0;background:#efefef}.tabs{display:flex;align-items:flex-end;height:28px;flex:none;border-bottom:1px solid #b4b4b4}.t{height:27px;width:109px;background:#fafafa;border:1px solid #bbb;border-bottom:0;margin-bottom:-1px;display:flex;align-items:center;padding:1px 0 0 10px;border-radius:2px 2px 0 0}.p{height:25px;width:31px;background:#e3e3e3;border:1px solid #bbb;border-left:0;border-bottom:0;text-align:center;font-size:13px;line-height:27px}.bar{display:flex;flex:none;align-items:center;height:27px;background:linear-gradient(#f8f8f8,#eee)}.tw{font:600 12.5px/14px "Noto Sans",sans-serif;color:#777767;width:27px;text-align:center;letter-spacing:-.5px}.rv{font-weight:bold;margin:0 11px 0 6px}u{text-underline-offset:1px}.btns{display:flex;gap:1px}.c{width:14px;text-align:center;font-size:15px;color:#333;margin-left:7px}`}
  html(){const b=(n,z=16)=>`<pv-button w="26" h="25"><pv-icon n="${n}" size="${z}"></pv-icon></pv-button>`;const k=(l,w=26,z=17)=>row(l,w,z);return `<div class="tabs"><div class="t"><pv-icon n="win" size="17"></pv-icon><fit-text w="51" style="margin:2px 3px 0 2px">Layout #1</fit-text><pv-icon n="close" size="11"></pv-icon></div><div class="p">+</div></div><div class="bar">${k('undocam redocam',27,19)}<pv-sep w="5" p="2"></pv-sep>${k('shot',26,19)}<pv-sep w="5" p="2"></pv-sep><span class="tw">2D</span>${k('camedit',26,19)}<pv-sep w="5" p="3"></pv-sep>${k('splus sminus spm')}<pv-sep w="6" p="4"></pv-sep>${k('sf sp sfr spf sfp spp sblk icube ipt ht hp qf qp gplus')}<span class="c">»</span><fit-text class="rv" w="74"><u>RenderView1</u></fit-text><div class="btns">${b('sh')}${b('sv')}${b('win',19)}${b('close',11)}</div></div><pv-view></pv-view>`}
});
def('pv-app',class extends Base{
  css(){return `:host{display:flex;flex-direction:column;width:1152px;height:762px;overflow:hidden;border-top:1px solid #111;background:#efefef}.top{border-left:1px solid #222}.body{display:flex;flex:1;min-height:0}`}
  html(){return `<div class="top"><pv-title></pv-title><pv-menu></pv-menu><pv-toolbars></pv-toolbars></div><div class="body"><pv-left></pv-left><pv-main></pv-main></div>`}
});
</script>
</body>
</html>
